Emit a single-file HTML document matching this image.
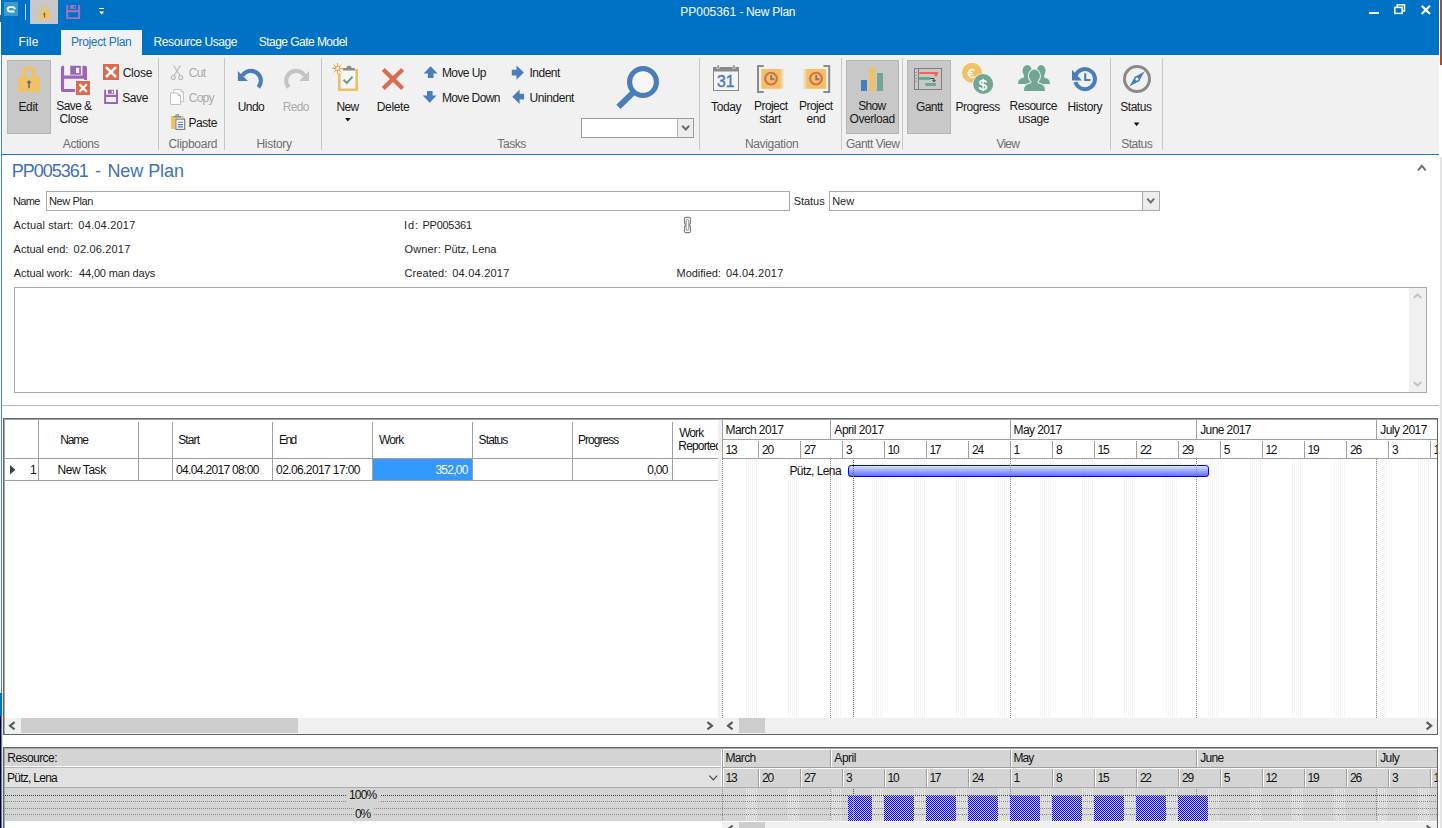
<!DOCTYPE html>
<html><head><meta charset="utf-8"><title>PP005361 - New Plan</title>
<style>
html,body{margin:0;padding:0;background:#fff;overflow:hidden;}
body{width:1442px;height:828px;position:relative;font-family:'Liberation Sans',sans-serif;}
#bg div,#bg2 div{position:absolute;}
#tx span{position:absolute;white-space:pre;font-family:'Liberation Sans',sans-serif;}
svg#ov{position:absolute;left:0;top:0;}
</style></head><body>
<div id="bg">
<div style="left:1px;top:0px;width:1438px;height:55px;background:#0072C6;"></div>
<div style="left:1440px;top:0px;width:2px;height:65px;background:#B7472A;"></div>
<div style="left:1440px;top:157px;width:2px;height:671px;background:#E4E4E4;"></div>
<div style="left:2px;top:55px;width:1437px;height:99px;background:#F1F1F1;"></div>
<div style="left:1px;top:154px;width:1438px;height:1px;background:#1979CA;"></div>
<div style="left:1px;top:55px;width:1px;height:773px;background:#4A82C2;"></div>
<div style="left:0px;top:693px;width:2px;height:23px;background:#0072C6;"></div>
<div style="left:0px;top:716px;width:1px;height:112px;background:#000;"></div>
<div style="left:2px;top:693px;width:1px;height:135px;background:#E4E4E4;"></div>
<div style="left:0px;top:15px;width:1px;height:7px;background:#555;"></div>
<div style="left:30px;top:0px;width:28px;height:24px;background:#C8C8C8;"></div>
<div style="left:25px;top:4px;width:1px;height:16px;background:rgba(255,255,255,.75);"></div>
<div style="left:61px;top:30px;width:81px;height:25px;background:#F1F1F1;"></div>
<div style="left:158px;top:58px;width:1px;height:92px;background:#C8C8C8;"></div>
<div style="left:224px;top:58px;width:1px;height:92px;background:#C8C8C8;"></div>
<div style="left:321px;top:58px;width:1px;height:92px;background:#C8C8C8;"></div>
<div style="left:699px;top:58px;width:1px;height:92px;background:#C8C8C8;"></div>
<div style="left:841px;top:58px;width:1px;height:92px;background:#C8C8C8;"></div>
<div style="left:902px;top:58px;width:1px;height:92px;background:#C8C8C8;"></div>
<div style="left:1110px;top:58px;width:1px;height:92px;background:#C8C8C8;"></div>
<div style="left:1162px;top:58px;width:1px;height:92px;background:#C8C8C8;"></div>
<div style="left:7px;top:60px;width:44px;height:74px;background:#C8C8C8;box-sizing:border-box;border:1px solid #B5B5B5;"></div>
<div style="left:846px;top:60px;width:53px;height:74px;background:#C8C8C8;box-sizing:border-box;border:1px solid #B5B5B5;"></div>
<div style="left:907px;top:60px;width:44px;height:74px;background:#C8C8C8;box-sizing:border-box;border:1px solid #B5B5B5;"></div>
<div style="left:581px;top:118px;width:113px;height:20px;background:#fff;box-sizing:border-box;border:1px solid #9A9A9A;"></div>
<div style="left:677px;top:119px;width:15px;height:18px;background:#EDEDED;border-left:1px solid #B4B4B4;"></div>
<div style="left:46px;top:191px;width:744px;height:20px;background:#fff;box-sizing:border-box;border:1px solid #ABABAB;"></div>
<div style="left:829px;top:191px;width:331px;height:20px;background:#fff;box-sizing:border-box;border:1px solid #ABABAB;"></div>
<div style="left:1142px;top:192px;width:16px;height:18px;background:#EDEDED;border-left:1px solid #ABABAB;"></div>
<div style="left:14px;top:287px;width:1413px;height:106px;background:#fff;box-sizing:border-box;border:1px solid #ABABAB;"></div>
<div style="left:1409px;top:288px;width:17px;height:104px;background:#F0F0F0;"></div>
<div style="left:2px;top:405px;width:1437px;height:1px;background:#B4B4B4;"></div>
<div style="left:3px;top:418px;width:1435px;height:1px;background:#646464;"></div>
<div style="left:3px;top:418px;width:1px;height:317px;background:#646464;"></div>
<div style="left:4px;top:419px;width:1433px;height:1px;background:#A6A6A6;"></div>
<div style="left:4px;top:419px;width:1px;height:315px;background:#A6A6A6;"></div>
<div style="left:3px;top:734px;width:1435px;height:1px;background:#646464;"></div>
<div style="left:1437px;top:418px;width:1px;height:317px;background:#646464;"></div>
<div style="left:5px;top:458px;width:713px;height:1px;background:#A0A0A0;"></div>
<div style="left:5px;top:480px;width:713px;height:1px;background:#A0A0A0;"></div>
<div style="left:38px;top:420px;width:1px;height:61px;background:#A0A0A0;"></div>
<div style="left:138px;top:422px;width:1px;height:36px;background:#A0A0A0;"></div>
<div style="left:138px;top:459px;width:1px;height:22px;background:#A0A0A0;"></div>
<div style="left:172px;top:422px;width:1px;height:36px;background:#A0A0A0;"></div>
<div style="left:172px;top:459px;width:1px;height:22px;background:#A0A0A0;"></div>
<div style="left:272px;top:422px;width:1px;height:36px;background:#A0A0A0;"></div>
<div style="left:272px;top:459px;width:1px;height:22px;background:#A0A0A0;"></div>
<div style="left:372px;top:422px;width:1px;height:36px;background:#A0A0A0;"></div>
<div style="left:372px;top:459px;width:1px;height:22px;background:#A0A0A0;"></div>
<div style="left:472px;top:422px;width:1px;height:36px;background:#A0A0A0;"></div>
<div style="left:472px;top:459px;width:1px;height:22px;background:#A0A0A0;"></div>
<div style="left:572px;top:422px;width:1px;height:36px;background:#A0A0A0;"></div>
<div style="left:572px;top:459px;width:1px;height:22px;background:#A0A0A0;"></div>
<div style="left:672px;top:422px;width:1px;height:36px;background:#A0A0A0;"></div>
<div style="left:672px;top:459px;width:1px;height:22px;background:#A0A0A0;"></div>
<div style="left:373px;top:459px;width:99px;height:21px;background:#3399FF;"></div>
<div style="left:722px;top:420px;width:1px;height:39px;background:#A0A0A0;"></div>
<div style="left:722px;top:439px;width:715px;height:1px;background:#A0A0A0;"></div>
<div style="left:722px;top:458px;width:715px;height:1px;background:#A0A0A0;"></div>
<div style="left:758px;top:441px;width:1px;height:17px;background:#A0A0A0;"></div>
<div style="left:800px;top:441px;width:1px;height:17px;background:#A0A0A0;"></div>
<div style="left:842px;top:441px;width:1px;height:17px;background:#A0A0A0;"></div>
<div style="left:884px;top:441px;width:1px;height:17px;background:#A0A0A0;"></div>
<div style="left:926px;top:441px;width:1px;height:17px;background:#A0A0A0;"></div>
<div style="left:968px;top:441px;width:1px;height:17px;background:#A0A0A0;"></div>
<div style="left:1010px;top:441px;width:1px;height:17px;background:#A0A0A0;"></div>
<div style="left:1052px;top:441px;width:1px;height:17px;background:#A0A0A0;"></div>
<div style="left:1094px;top:441px;width:1px;height:17px;background:#A0A0A0;"></div>
<div style="left:1136px;top:441px;width:1px;height:17px;background:#A0A0A0;"></div>
<div style="left:1178px;top:441px;width:1px;height:17px;background:#A0A0A0;"></div>
<div style="left:1220px;top:441px;width:1px;height:17px;background:#A0A0A0;"></div>
<div style="left:1262px;top:441px;width:1px;height:17px;background:#A0A0A0;"></div>
<div style="left:1304px;top:441px;width:1px;height:17px;background:#A0A0A0;"></div>
<div style="left:1346px;top:441px;width:1px;height:17px;background:#A0A0A0;"></div>
<div style="left:1388px;top:441px;width:1px;height:17px;background:#A0A0A0;"></div>
<div style="left:1430px;top:441px;width:1px;height:17px;background:#A0A0A0;"></div>
<div style="left:830px;top:420px;width:1px;height:19px;background:#A0A0A0;"></div>
<div style="left:1010px;top:420px;width:1px;height:19px;background:#A0A0A0;"></div>
<div style="left:1196px;top:420px;width:1px;height:19px;background:#A0A0A0;"></div>
<div style="left:1376px;top:420px;width:1px;height:19px;background:#A0A0A0;"></div>
<div style="left:5px;top:718px;width:713px;height:16px;background:#F0F0F0;"></div>
<div style="left:722px;top:718px;width:715px;height:16px;background:#F0F0F0;"></div>
<div style="left:21px;top:718px;width:277px;height:15px;background:#CDCDCD;"></div>
<div style="left:739px;top:718px;width:26px;height:15px;background:#CDCDCD;"></div>
<div style="left:3px;top:747px;width:1435px;height:1px;background:#646464;"></div>
<div style="left:3px;top:747px;width:1px;height:81px;background:#646464;"></div>
<div style="left:4px;top:748px;width:1433px;height:1px;background:#A6A6A6;"></div>
<div style="left:4px;top:748px;width:1px;height:80px;background:#A6A6A6;"></div>
<div style="left:1437px;top:747px;width:1px;height:81px;background:#646464;"></div>
<div style="left:5px;top:749px;width:716px;height:17px;background:#D4D4D4;"></div>
<div style="left:5px;top:766px;width:716px;height:1px;background:#fff;"></div>
<div style="left:5px;top:767px;width:716px;height:1px;background:#B4B4B4;"></div>
<div style="left:5px;top:768px;width:716px;height:19px;background:#E1E1E1;"></div>
<div style="left:721px;top:749px;width:1px;height:18px;background:#fff;"></div>
<div style="left:722px;top:748px;width:1px;height:40px;background:#A0A0A0;"></div>
<div style="left:5px;top:787px;width:1432px;height:1px;background:#ABABAB;"></div>
<div style="left:5px;top:788px;width:1432px;height:33px;background:#D4D4D4;"></div>
<div style="left:722px;top:822px;width:715px;height:6px;background:#F0F0F0;"></div>
<div style="left:739px;top:822px;width:26px;height:6px;background:#CDCDCD;"></div>
<div style="left:723px;top:749px;width:714px;height:18px;background:#D4D4D4;"></div>
<div style="left:723px;top:749px;width:714px;height:1px;background:#fff;"></div>
<div style="left:723px;top:749px;width:1px;height:18px;background:#fff;"></div>
<div style="left:723px;top:767px;width:714px;height:1px;background:#A0A0A0;"></div>
<div style="left:723px;top:768px;width:714px;height:19px;background:#D4D4D4;"></div>
<div style="left:723px;top:768px;width:714px;height:1px;background:#fff;"></div>
<div style="left:723px;top:768px;width:1px;height:19px;background:#fff;"></div>
<div style="left:830px;top:750px;width:1px;height:17px;background:#A0A0A0;"></div>
<div style="left:831px;top:750px;width:1px;height:17px;background:#fff;"></div>
<div style="left:1010px;top:750px;width:1px;height:17px;background:#A0A0A0;"></div>
<div style="left:1011px;top:750px;width:1px;height:17px;background:#fff;"></div>
<div style="left:1196px;top:750px;width:1px;height:17px;background:#A0A0A0;"></div>
<div style="left:1197px;top:750px;width:1px;height:17px;background:#fff;"></div>
<div style="left:1376px;top:750px;width:1px;height:17px;background:#A0A0A0;"></div>
<div style="left:1377px;top:750px;width:1px;height:17px;background:#fff;"></div>
<div style="left:758px;top:769px;width:1px;height:18px;background:#A0A0A0;"></div>
<div style="left:759px;top:769px;width:1px;height:18px;background:#fff;"></div>
<div style="left:800px;top:769px;width:1px;height:18px;background:#A0A0A0;"></div>
<div style="left:801px;top:769px;width:1px;height:18px;background:#fff;"></div>
<div style="left:842px;top:769px;width:1px;height:18px;background:#A0A0A0;"></div>
<div style="left:843px;top:769px;width:1px;height:18px;background:#fff;"></div>
<div style="left:884px;top:769px;width:1px;height:18px;background:#A0A0A0;"></div>
<div style="left:885px;top:769px;width:1px;height:18px;background:#fff;"></div>
<div style="left:926px;top:769px;width:1px;height:18px;background:#A0A0A0;"></div>
<div style="left:927px;top:769px;width:1px;height:18px;background:#fff;"></div>
<div style="left:968px;top:769px;width:1px;height:18px;background:#A0A0A0;"></div>
<div style="left:969px;top:769px;width:1px;height:18px;background:#fff;"></div>
<div style="left:1010px;top:769px;width:1px;height:18px;background:#A0A0A0;"></div>
<div style="left:1011px;top:769px;width:1px;height:18px;background:#fff;"></div>
<div style="left:1052px;top:769px;width:1px;height:18px;background:#A0A0A0;"></div>
<div style="left:1053px;top:769px;width:1px;height:18px;background:#fff;"></div>
<div style="left:1094px;top:769px;width:1px;height:18px;background:#A0A0A0;"></div>
<div style="left:1095px;top:769px;width:1px;height:18px;background:#fff;"></div>
<div style="left:1136px;top:769px;width:1px;height:18px;background:#A0A0A0;"></div>
<div style="left:1137px;top:769px;width:1px;height:18px;background:#fff;"></div>
<div style="left:1178px;top:769px;width:1px;height:18px;background:#A0A0A0;"></div>
<div style="left:1179px;top:769px;width:1px;height:18px;background:#fff;"></div>
<div style="left:1220px;top:769px;width:1px;height:18px;background:#A0A0A0;"></div>
<div style="left:1221px;top:769px;width:1px;height:18px;background:#fff;"></div>
<div style="left:1262px;top:769px;width:1px;height:18px;background:#A0A0A0;"></div>
<div style="left:1263px;top:769px;width:1px;height:18px;background:#fff;"></div>
<div style="left:1304px;top:769px;width:1px;height:18px;background:#A0A0A0;"></div>
<div style="left:1305px;top:769px;width:1px;height:18px;background:#fff;"></div>
<div style="left:1346px;top:769px;width:1px;height:18px;background:#A0A0A0;"></div>
<div style="left:1347px;top:769px;width:1px;height:18px;background:#fff;"></div>
<div style="left:1388px;top:769px;width:1px;height:18px;background:#A0A0A0;"></div>
<div style="left:1389px;top:769px;width:1px;height:18px;background:#fff;"></div>
<div style="left:1430px;top:769px;width:1px;height:18px;background:#A0A0A0;"></div>
<div style="left:1431px;top:769px;width:1px;height:18px;background:#fff;"></div>
</div>
<svg id="ov" width="1442" height="828" viewBox="0 0 1442 828" shape-rendering="crispEdges">
<defs>
<pattern id="wk" width="4" height="2" patternUnits="userSpaceOnUse"><rect x="0" y="0" width="1" height="1" fill="#EDEDED"/><rect x="2" y="1" width="1" height="1" fill="#EDEDED"/></pattern>
<pattern id="wk2" width="4" height="2" patternUnits="userSpaceOnUse"><rect x="0" y="1" width="1" height="1" fill="#F4F4F4"/><rect x="2" y="0" width="1" height="1" fill="#F4F4F4"/></pattern>
<pattern id="chk" width="2" height="2" patternUnits="userSpaceOnUse"><rect x="0" y="0" width="2" height="2" fill="#D4D4D4"/><rect x="0" y="0" width="1" height="1" fill="#0000FF"/><rect x="1" y="1" width="1" height="1" fill="#0000FF"/></pattern>
<linearGradient id="bar" x1="0" y1="0" x2="0" y2="1"><stop offset="0" stop-color="#E0F0F8"/><stop offset="0.2" stop-color="#C2D0F8"/><stop offset="1" stop-color="#5E66F8"/></linearGradient>
</defs>
<rect x="746" y="459" width="12" height="259" fill="url(#wk)"/>
<rect x="746" y="788" width="12" height="33" fill="url(#wk2)"/>
<rect x="788" y="459" width="12" height="259" fill="url(#wk)"/>
<rect x="788" y="788" width="12" height="33" fill="url(#wk2)"/>
<rect x="830" y="459" width="12" height="259" fill="url(#wk)"/>
<rect x="830" y="788" width="12" height="33" fill="url(#wk2)"/>
<rect x="872" y="459" width="12" height="259" fill="url(#wk)"/>
<rect x="872" y="788" width="12" height="33" fill="url(#wk2)"/>
<rect x="914" y="459" width="12" height="259" fill="url(#wk)"/>
<rect x="914" y="788" width="12" height="33" fill="url(#wk2)"/>
<rect x="956" y="459" width="12" height="259" fill="url(#wk)"/>
<rect x="956" y="788" width="12" height="33" fill="url(#wk2)"/>
<rect x="998" y="459" width="12" height="259" fill="url(#wk)"/>
<rect x="998" y="788" width="12" height="33" fill="url(#wk2)"/>
<rect x="1040" y="459" width="12" height="259" fill="url(#wk)"/>
<rect x="1040" y="788" width="12" height="33" fill="url(#wk2)"/>
<rect x="1082" y="459" width="12" height="259" fill="url(#wk)"/>
<rect x="1082" y="788" width="12" height="33" fill="url(#wk2)"/>
<rect x="1124" y="459" width="12" height="259" fill="url(#wk)"/>
<rect x="1124" y="788" width="12" height="33" fill="url(#wk2)"/>
<rect x="1166" y="459" width="12" height="259" fill="url(#wk)"/>
<rect x="1166" y="788" width="12" height="33" fill="url(#wk2)"/>
<rect x="1208" y="459" width="12" height="259" fill="url(#wk)"/>
<rect x="1208" y="788" width="12" height="33" fill="url(#wk2)"/>
<rect x="1250" y="459" width="12" height="259" fill="url(#wk)"/>
<rect x="1250" y="788" width="12" height="33" fill="url(#wk2)"/>
<rect x="1292" y="459" width="12" height="259" fill="url(#wk)"/>
<rect x="1292" y="788" width="12" height="33" fill="url(#wk2)"/>
<rect x="1334" y="459" width="12" height="259" fill="url(#wk)"/>
<rect x="1334" y="788" width="12" height="33" fill="url(#wk2)"/>
<rect x="1376" y="459" width="12" height="259" fill="url(#wk)"/>
<rect x="1376" y="788" width="12" height="33" fill="url(#wk2)"/>
<rect x="1418" y="459" width="12" height="259" fill="url(#wk)"/>
<rect x="1418" y="788" width="12" height="33" fill="url(#wk2)"/>
<rect x="848.5" y="465.5" width="360" height="11" rx="2.6" ry="2.6" fill="url(#bar)" stroke="#0000FF" stroke-width="1" shape-rendering="auto"/>
<line x1="722.5" y1="459" x2="722.5" y2="718" stroke="#8A8A8A" stroke-dasharray="1 1"/>
<line x1="830.5" y1="459" x2="830.5" y2="718" stroke="#8A8A8A" stroke-dasharray="1 1"/>
<line x1="853.5" y1="460" x2="853.5" y2="718" stroke="#686868" stroke-dasharray="1 1"/>
<line x1="1010.5" y1="459" x2="1010.5" y2="718" stroke="#8A8A8A" stroke-dasharray="1 1"/>
<line x1="1196.5" y1="459" x2="1196.5" y2="718" stroke="#8A8A8A" stroke-dasharray="1 1"/>
<line x1="1376.5" y1="459" x2="1376.5" y2="718" stroke="#8A8A8A" stroke-dasharray="1 1"/>
<line x1="722.5" y1="789" x2="722.5" y2="821" stroke="#8A8A8A" stroke-dasharray="1 1"/>
<line x1="830.5" y1="789" x2="830.5" y2="821" stroke="#8A8A8A" stroke-dasharray="1 1"/>
<line x1="1010.5" y1="789" x2="1010.5" y2="821" stroke="#8A8A8A" stroke-dasharray="1 1"/>
<line x1="1196.5" y1="789" x2="1196.5" y2="821" stroke="#8A8A8A" stroke-dasharray="1 1"/>
<line x1="1376.5" y1="789" x2="1376.5" y2="821" stroke="#8A8A8A" stroke-dasharray="1 1"/>
<line x1="5" y1="795.5" x2="347" y2="795.5" stroke="#404040" stroke-dasharray="1 1"/>
<line x1="381" y1="795.5" x2="1437" y2="795.5" stroke="#404040" stroke-dasharray="1 1"/>
<line x1="5" y1="801.5" x2="347" y2="801.5" stroke="#8A8A8A" stroke-dasharray="1 1"/>
<line x1="381" y1="801.5" x2="1437" y2="801.5" stroke="#8A8A8A" stroke-dasharray="1 1"/>
<line x1="5" y1="808.5" x2="354" y2="808.5" stroke="#8A8A8A" stroke-dasharray="1 1"/>
<line x1="374" y1="808.5" x2="1437" y2="808.5" stroke="#8A8A8A" stroke-dasharray="1 1"/>
<line x1="5" y1="814.5" x2="354" y2="814.5" stroke="#8A8A8A" stroke-dasharray="1 1"/>
<line x1="374" y1="814.5" x2="1437" y2="814.5" stroke="#8A8A8A" stroke-dasharray="1 1"/>
<rect x="848" y="796" width="24" height="25" fill="url(#chk)"/>
<rect x="884" y="796" width="30" height="25" fill="url(#chk)"/>
<rect x="926" y="796" width="30" height="25" fill="url(#chk)"/>
<rect x="968" y="796" width="30" height="25" fill="url(#chk)"/>
<rect x="1010" y="796" width="30" height="25" fill="url(#chk)"/>
<rect x="1052" y="796" width="30" height="25" fill="url(#chk)"/>
<rect x="1094" y="796" width="30" height="25" fill="url(#chk)"/>
<rect x="1136" y="796" width="30" height="25" fill="url(#chk)"/>
<rect x="1178" y="796" width="30" height="25" fill="url(#chk)"/>
<line x1="853.5" y1="789" x2="853.5" y2="821" stroke="#505050" stroke-dasharray="1 1"/>
<g shape-rendering="geometricPrecision">
<rect x="4" y="2" width="14" height="14" fill="#3C9BCD" shape-rendering="crispEdges"/>
<path d="M14.4,11.5 H9.9 A2.2,2.2 0 0 1 9.9,7.1 H12.5 A2.2,2.2 0 0 1 14.7,9.3" fill="none" stroke="#fff" stroke-width="1.8"/>
<rect x="39" y="11" width="11" height="8" fill="#F0C165" shape-rendering="crispEdges"/>
<path d="M41.6,11.2 V9.5 a2.9,2.9 0 0 1 5.8,0 V11.2" fill="none" stroke="#F0C165" stroke-width="1.5"/>
<path d="M43.4,14.6 L44.6,13.4 V17.6" fill="none" stroke="#6f6544" stroke-width="1.2"/>
<path transform="translate(66.2,5)" fill-rule="evenodd" fill="#A66FC0" d="M0,0 H2 V5 H11.9 V0 H13.9 V14.1 H0 Z M2,7.3 V12.2 H11.9 V7.3 Z M3.9,0 H9.8 V3.9 H3.9 Z M7.6,0.9 V3.2 H8.9 V0.9 Z"/>
<rect x="99" y="8" width="5.4" height="1.2" fill="#fff" shape-rendering="crispEdges"/>
<path d="M98.8,11 H104.6 L101.7,14.6 Z" fill="#fff"/><path d="M98.8,11 H104.6" stroke="#333" stroke-width=".8"/>
<rect x="1369" y="12" width="9.5" height="2" fill="#fff" shape-rendering="crispEdges"/>
<rect x="1397.2" y="4.8" width="7.3" height="6.2" fill="none" stroke="#fff" stroke-width="1.5"/>
<rect x="1394.8" y="7.4" width="7.3" height="6" fill="#0072C6" stroke="#fff" stroke-width="1.5"/>
<path d="M1421.7,5.7 L1430,14 M1430,5.7 L1421.7,14" stroke="#fff" stroke-width="2.3"/>
<rect x="18" y="77" width="22" height="15" fill="#F0C165"/>
<path d="M24,77.5 V73 a5,5 0 0 1 10,0 V77.5" fill="none" stroke="#F0C165" stroke-width="4"/>
<circle cx="29" cy="82.2" r="1.8" fill="#6B6B6B"/><rect x="28.2" y="83" width="1.6" height="5.2" fill="#6B6B6B"/>
<path fill="#9C66B6" d="M62.9,65.8 H64.1 V91.9 H62.9 a2,2 0 0 1 -2,-2 V67.8 a2,2 0 0 1 2,-2 Z M62,89 H76 V91.9 H62 Z M62,75.6 H87 V78.8 H62 Z M82.4,65.8 H85 a2,2 0 0 1 2,2 V80 H84 V78 H82.4 Z"/>
<path fill-rule="evenodd" fill="#9C66B6" d="M70.2,65.8 H80.9 V74.8 H70.2 Z M76,67.8 V73 H79.2 V67.8 Z"/>
<rect x="75.5" y="80.5" width="15" height="15" fill="#DB6A4E" stroke="#F1F1F1" stroke-width="1"/>
<path d="M79.4,84.2 L86.8,91.7 M86.8,84.2 L79.4,91.7" stroke="#fff" stroke-width="2.2"/>
<rect x="103" y="64" width="16" height="16" fill="#DB6A4E"/>
<path d="M106,67.2 L116,77 M116,67.2 L106,77" stroke="#fff" stroke-width="2.5"/>
<path transform="translate(104.1,89.8)" fill-rule="evenodd" fill="#9C66B6" d="M0,0 H2 V5 H11.9 V0 H13.9 V14.1 H0 Z M2,7.3 V12.2 H11.9 V7.3 Z M3.9,0 H9.8 V3.9 H3.9 Z M7.6,0.9 V3.2 H8.9 V0.9 Z"/>
<path d="M173.6,65.5 L180.2,76 M180.4,65.5 L173.8,76" stroke="#BCBCBC" stroke-width="1.3" fill="none"/>
<circle cx="173.3" cy="77.6" r="2" fill="none" stroke="#BCBCBC" stroke-width="1.2"/><circle cx="180.7" cy="77.6" r="2" fill="none" stroke="#BCBCBC" stroke-width="1.2"/>
<path d="M173.9,89.5 H181 L183.5,92 V101.5 H173.9 Z" fill="#FDFDFD" stroke="#C2C2C2" stroke-width="1"/>
<path d="M181,89.5 V92 H183.5" fill="none" stroke="#C2C2C2" stroke-width="1"/>
<path d="M170.5,93 H178 L180.5,95.5 V104.5 H170.5 Z" fill="#FDFDFD" stroke="#C2C2C2" stroke-width="1"/>
<path d="M178,93 V95.5 H180.5" fill="none" stroke="#C2C2C2" stroke-width="1"/>
<rect x="171" y="116" width="4" height="13" fill="#F0C165"/><rect x="171" y="116" width="12.4" height="1.6" fill="#F0C165"/><rect x="182" y="116" width="1.4" height="2.6" fill="#F0C165"/>
<path d="M173.4,117.4 V116 H175.4 V115 a1,1 0 0 1 1,-1 H178.2 a1,1 0 0 1 1,1 V116 H181.2 V117.4 Z" fill="#8C8C8C"/>
<rect x="176.5" y="114.7" width="1.6" height="0.9" fill="#F1F1F1"/>
<rect x="175.9" y="119.1" width="8.8" height="10.3" fill="#FDFDFD" stroke="#767676" stroke-width="1.1"/>
<path d="M177.8,122.3 H183 M177.8,124.6 H183 M177.8,126.9 H183" stroke="#4A7EBB" stroke-width="1.1"/>
<path d="M242.47,75.77 A9.85,9.85 0 1 1 258.32,87.29" fill="none" stroke="#4A7EBB" stroke-width="4.1"/><path d="M237.85,71 V81 H247.9 Z" fill="#4A7EBB"/>
<g transform="translate(547,0) scale(-1,1)"><path d="M242.47,75.77 A9.85,9.85 0 1 1 258.32,87.29" fill="none" stroke="#C4C4C4" stroke-width="4.1"/><path d="M237.85,71 V81 H247.9 Z" fill="#C4C4C4"/></g>
<rect x="340.6" y="70.5" width="14.8" height="18" fill="#F6F6F6"/>
<path d="M339.3,73.3 V89.7 H356.7 V69" fill="none" stroke="#EDBF68" stroke-width="2.6"/>
<path d="M342.6,70.6 H355.4 L354.6,68 H351.6 a2.6,2.2 0 0 0 -5.2,0 H343.4 Z" fill="#8C8C8C"/>
<path d="M343.6,79.8 L346.8,83 L352.6,76.6" fill="none" stroke="#6AA28C" stroke-width="2.1"/>
<path d="M337.5,63 V74 M332,68.5 H343 M333.6,64.6 L341.4,72.4 M341.4,64.6 L333.6,72.4" stroke="#F0A63C" stroke-width="1"/>
<circle cx="337.5" cy="68.5" r="2" fill="#F1F1F1" stroke="#F0A63C" stroke-width="1"/>
<path d="M383.3,69.4 L402.6,88.6 M402.6,69.4 L383.3,88.6" stroke="#DB6A4E" stroke-width="4.2"/>
<path fill="#4A7EBB" d="M430.6,66.3 L437.6,73.6 H433.5 V78 H427.8 V73.6 H423.6 Z"/>
<path fill="#4A7EBB" d="M427,91 H432.6 V95.5 H436.6 L429.7,102.7 L422.7,95.5 H427 Z"/>
<path fill="#4A7EBB" d="M511.8,69.8 H516.5 V65.4 L523.9,72.6 L516.5,79.8 V75.4 H511.8 Z"/>
<path fill="#4A7EBB" d="M524.1,93.8 H519.6 V89.5 L512.3,96.7 L519.6,103.9 V99.6 H524.1 Z"/>
<circle cx="643" cy="82" r="13.4" fill="#F7F7F7" stroke="#4A7EBB" stroke-width="5.2"/>
<path d="M633.6,92.2 L618.4,106.8" stroke="#4A7EBB" stroke-width="6"/>
<path d="M682.2,125.8 l3.5,3.7 l3.5,-3.7" fill="none" stroke="#6A6A6A" stroke-width="2"/>
<path d="M1147.2,198.6 l3.5,3.9 l3.5,-3.9" fill="none" stroke="#6E6E6E" stroke-width="1.9"/>
<path d="M1418,170.4 l3.85,-4.6 l3.85,4.6" fill="none" stroke="#707070" stroke-width="1.9"/>
<rect x="713.5" y="67.5" width="25" height="23" fill="#F5F5F5" stroke="#8A8A8A" stroke-width="1"/>
<rect x="713" y="67" width="26" height="4.5" fill="#8A8A8A"/>
<rect x="717" y="65" width="2.2" height="3.6" fill="#8A8A8A" stroke="#F1F1F1" stroke-width=".6"/><rect x="732.8" y="65" width="2.2" height="3.6" fill="#8A8A8A" stroke="#F1F1F1" stroke-width=".6"/>
<text x="717" y="86.8" font-family="Liberation Sans, sans-serif" font-size="17" fill="#4A7EBB" stroke="#4A7EBB" stroke-width=".45" textLength="17.6" lengthAdjust="spacingAndGlyphs">31</text>
<defs><linearGradient id="fr" x1="0" x2="1" y1="0" y2="0"><stop offset="0" stop-color="#F0C165"/><stop offset=".78" stop-color="#F0C165"/><stop offset="1" stop-color="#F0C165" stop-opacity="0"/></linearGradient><linearGradient id="fl" x1="1" x2="0" y1="0" y2="0"><stop offset="0" stop-color="#F0C165"/><stop offset=".78" stop-color="#F0C165"/><stop offset="1" stop-color="#F0C165" stop-opacity="0"/></linearGradient></defs>
<rect x="761.3" y="69" width="23.4" height="19.8" fill="url(#fr)"/>
<path d="M763.8,66 H758 V92 H763.8" fill="none" stroke="#8A8A8A" stroke-width="2"/>
<circle cx="771" cy="78.6" r="5.9" fill="none" stroke="#DB6A4E" stroke-width="2.1"/><path d="M771.2,75 V79.2 H774.4" fill="none" stroke="#7A7A7A" stroke-width="1.9"/>
<rect x="802.3" y="69" width="23.8" height="19.8" fill="url(#fl)"/>
<path d="M823.4,66 H829.2 V92 H823.4" fill="none" stroke="#8A8A8A" stroke-width="2"/>
<circle cx="816" cy="78.6" r="5.9" fill="none" stroke="#DB6A4E" stroke-width="2.1"/><path d="M816.2,75 V79.2 H819.4" fill="none" stroke="#7A7A7A" stroke-width="1.9"/>
<rect x="861" y="80" width="6" height="11" fill="#4A7EBB"/><rect x="869" y="67" width="6" height="24" fill="#F0C165"/><rect x="877" y="73" width="6" height="18" fill="#72A694"/>
<rect x="914.5" y="68.5" width="27" height="21" fill="none" stroke="#7E7E7E" stroke-width="1"/>
<path d="M918.5,68.5 V89.5" stroke="#7E7E7E" stroke-width="1"/><path d="M915,72.5 H917 M915,75.5 H917 M915,78.5 H917 M915,81.5 H917" stroke="#9A9A9A" stroke-width=".8"/>
<path d="M919.2,72 H938.2 V73.6 L936,77 L933.6,74 H919.2 Z" fill="#EE6A48"/>
<rect x="919.2" y="77" width="11" height="3" fill="#72A694"/><rect x="925.2" y="83" width="10.8" height="3" fill="#72A694"/>
<path d="M930.2,78.5 H934 V81.5 M932.4,80 L934,81.8 L935.6,80" fill="none" stroke="#3A3A3A" stroke-width="1"/>
<circle cx="972" cy="72.8" r="10" fill="#F0C165"/>
<circle cx="983.2" cy="84" r="10.6" fill="#F1F1F1"/><circle cx="983.2" cy="84" r="10" fill="#72A694"/>
<text x="967.6" y="77.6" font-family="Liberation Sans, sans-serif" font-size="13" fill="#fff" stroke="#fff" stroke-width=".3">€</text>
<text x="978.8" y="89.6" font-family="Liberation Sans, sans-serif" font-size="15" fill="#fff" stroke="#fff" stroke-width=".3">$</text>
<path d="M1018,84 C1018,79.7 1020.5,78.5 1023.8,77.5 L1024.0,74.6 L1030.0,74.6 L1030.2,77.5 C1033.5,78.5 1036,79.7 1036,84 Z" fill="#72A694"/>
<ellipse cx="1027.2" cy="70.8" rx="4.7" ry="5.8" fill="#72A694"/>
<path d="M1032,84 C1032,79.7 1034.5,78.5 1037.8,77.5 L1038.0,74.6 L1044.0,74.6 L1044.2,77.5 C1047.5,78.5 1050,79.7 1050,84 Z" fill="#72A694"/>
<ellipse cx="1041.2" cy="70.8" rx="4.4" ry="5.8" fill="#72A694"/>
<path d="M1024,91 C1024,85.4 1026.5,84.2 1031.3,83.2 L1031.5,80.5 L1037.5,80.5 L1037.7,83.2 C1042.5,84.2 1045,85.4 1045,91 Z" fill="#F1F1F1" stroke="#F1F1F1" stroke-width="2"/>
<ellipse cx="1034.4" cy="76" rx="5.5" ry="6.5" fill="#F1F1F1" stroke="#F1F1F1" stroke-width="2"/>
<path d="M1024,91 C1024,85.4 1026.5,84.2 1031.3,83.2 L1031.5,80.5 L1037.5,80.5 L1037.7,83.2 C1042.5,84.2 1045,85.4 1045,91 Z" fill="#72A694"/>
<ellipse cx="1034.4" cy="76" rx="5.5" ry="6.5" fill="#72A694"/>
<path d="M1075.6,75.6 A10,10 0 1 1 1075.4,82" fill="none" stroke="#4A7EBB" stroke-width="4"/>
<path d="M1072,69.8 V80.6 H1082 Z" fill="#4A7EBB"/>
<path d="M1085.2,73.2 V80 H1090.4" fill="none" stroke="#4A7EBB" stroke-width="2.1"/>
<circle cx="1137" cy="79" r="12.5" fill="none" stroke="#8A8A8A" stroke-width="3"/>
<path d="M1144.6,71.4 L1139.2,81 L1135,76.8 Z M1129.4,86.6 L1134.8,77 L1139,81.2 Z" fill="#4A7EBB"/>
<circle cx="1137" cy="79" r="2.2" fill="#F1F1F1" stroke="#4A7EBB" stroke-width="1.3"/>
<path d="M345,118 H350.6 L347.8,121.6 Z" fill="#111"/><path d="M1133.8,122.6 H1139.4 L1136.6,126.2 Z" fill="#111"/>
<rect x="684.4" y="217.4" width="6.2" height="7" rx="1.7" fill="none" stroke="#808080" stroke-width="1.1"/><rect x="684.4" y="225.6" width="6.2" height="7" rx="1.7" fill="none" stroke="#808080" stroke-width="1.1"/>
<rect x="686.1" y="219.6" width="2.8" height="10.8" rx="1.3" fill="#fff" stroke="#808080" stroke-width="1"/>
<path d="M1413.8,298 l3.7,-3.7 l3.7,3.7 M1413.8,382 l3.7,3.7 l3.7,-3.7" fill="none" stroke="#C2C2C2" stroke-width="1.9"/>
<path d="M10,465 L15.4,469.7 L10,474.4 Z" fill="#404040"/>
<path d="M14.6,722.2 l-4.6,3.6 l4.6,3.6 M707.4,722.2 l4.6,3.6 l-4.6,3.6 M732.6,722.2 l-4.6,3.6 l4.6,3.6 M1426.6,722.2 l4.6,3.6 l-4.6,3.6 M732.6,825.6 l-4.6,3.6 M1426.6,825.6 l4.6,3.6" fill="none" stroke="#5A5A5A" stroke-width="2.1"/>
<path d="M709.4,775.6 l3.9,4.2 l3.9,-4.2" fill="none" stroke="#444" stroke-width="1.2"/>
</g>
</svg>
<div id="tx">
<span style="left:680.25px;top:4px;font-size:12px;line-height:16px;color:#fff;letter-spacing:-0.014px;">PP005361</span>
<span style="left:739.51px;top:4px;font-size:12px;line-height:16px;color:#fff;">-</span>
<span style="left:745.90px;top:4px;font-size:12px;line-height:16px;color:#fff;letter-spacing:-0.251px;">New Plan</span>
<span style="left:18.40px;top:34px;font-size:12px;line-height:16px;color:#fff;letter-spacing:0.2px;">File</span>
<span style="left:70.90px;top:34px;font-size:12px;line-height:16px;color:#1C73C4;letter-spacing:-0.352px;">Project Plan</span>
<span style="left:153.60px;top:34px;font-size:12px;line-height:16px;color:#fff;letter-spacing:-0.431px;">Resource Usage</span>
<span style="left:258.75px;top:34px;font-size:12px;line-height:16px;color:#fff;letter-spacing:-0.535px;">Stage Gate Model</span>
<span style="left:18.40px;top:99px;font-size:12px;line-height:16px;color:#1A1A1A;letter-spacing:-0.335px;">Edit</span>
<span style="left:56.25px;top:98px;font-size:12px;line-height:16px;color:#1A1A1A;letter-spacing:-0.588px;">Save &amp;</span>
<span style="left:59.44px;top:111px;font-size:12px;line-height:16px;color:#1A1A1A;letter-spacing:-0.437px;">Close</span>
<span style="left:122.64px;top:65px;font-size:12px;line-height:16px;color:#1A1A1A;letter-spacing:-0.237px;">Close</span>
<span style="left:122.25px;top:90px;font-size:12px;line-height:16px;color:#1A1A1A;letter-spacing:-0.418px;">Save</span>
<span style="left:62.86px;top:136px;font-size:12px;line-height:16px;color:#6E6E6E;letter-spacing:-0.467px;">Actions</span>
<span style="left:188.84px;top:65px;font-size:12px;line-height:16px;color:#A9A9A9;letter-spacing:-0.72px;">Cut</span>
<span style="left:188.84px;top:90px;font-size:12px;line-height:16px;color:#A9A9A9;letter-spacing:-0.793px;">Copy</span>
<span style="left:188.60px;top:115px;font-size:12px;line-height:16px;color:#1A1A1A;letter-spacing:-0.479px;">Paste</span>
<span style="left:168.44px;top:136px;font-size:12px;line-height:16px;color:#6E6E6E;letter-spacing:-0.286px;">Clipboard</span>
<span style="left:237.75px;top:99px;font-size:12px;line-height:16px;color:#1A1A1A;letter-spacing:-0.567px;">Undo</span>
<span style="left:282.75px;top:99px;font-size:12px;line-height:16px;color:#A9A9A9;letter-spacing:-0.7px;">Redo</span>
<span style="left:256.50px;top:136px;font-size:12px;line-height:16px;color:#6E6E6E;letter-spacing:-0.296px;">History</span>
<span style="left:336.50px;top:99px;font-size:12px;line-height:16px;color:#1A1A1A;letter-spacing:-0.715px;">New</span>
<span style="left:376.75px;top:99px;font-size:12px;line-height:16px;color:#1A1A1A;letter-spacing:-0.333px;">Delete</span>
<span style="left:441.90px;top:65px;font-size:12px;line-height:16px;color:#1A1A1A;letter-spacing:-0.584px;">Move Up</span>
<span style="left:441.90px;top:90px;font-size:12px;line-height:16px;color:#1A1A1A;letter-spacing:-0.594px;">Move Down</span>
<span style="left:529.56px;top:65px;font-size:12px;line-height:16px;color:#1A1A1A;letter-spacing:-0.532px;">Indent</span>
<span style="left:529.60px;top:90px;font-size:12px;line-height:16px;color:#1A1A1A;letter-spacing:-0.457px;">Unindent</span>
<span style="left:497.36px;top:136px;font-size:12px;line-height:16px;color:#6E6E6E;letter-spacing:-0.453px;">Tasks</span>
<span style="left:711.11px;top:99px;font-size:12px;line-height:16px;color:#1A1A1A;letter-spacing:-0.389px;">Today</span>
<span style="left:754.00px;top:98px;font-size:12px;line-height:16px;color:#1A1A1A;letter-spacing:-0.559px;">Project</span>
<span style="left:759.50px;top:111px;font-size:12px;line-height:16px;color:#1A1A1A;letter-spacing:-0.401px;">start</span>
<span style="left:799.00px;top:98px;font-size:12px;line-height:16px;color:#1A1A1A;letter-spacing:-0.559px;">Project</span>
<span style="left:806.54px;top:111px;font-size:12px;line-height:16px;color:#1A1A1A;letter-spacing:-0.433px;">end</span>
<span style="left:744.90px;top:136px;font-size:12px;line-height:16px;color:#6E6E6E;letter-spacing:-0.319px;">Navigation</span>
<span style="left:858.25px;top:98px;font-size:12px;line-height:16px;color:#1A1A1A;letter-spacing:-0.728px;">Show</span>
<span style="left:849.50px;top:111px;font-size:12px;line-height:16px;color:#1A1A1A;letter-spacing:-0.414px;">Overload</span>
<span style="left:845.93px;top:136px;font-size:12px;line-height:16px;color:#6E6E6E;letter-spacing:-0.496px;">Gantt View</span>
<span style="left:915.93px;top:99px;font-size:12px;line-height:16px;color:#1A1A1A;letter-spacing:-0.571px;">Gantt</span>
<span style="left:955.50px;top:99px;font-size:12px;line-height:16px;color:#1A1A1A;letter-spacing:-0.461px;">Progress</span>
<span style="left:1009.60px;top:98px;font-size:12px;line-height:16px;color:#1A1A1A;letter-spacing:-0.514px;">Resource</span>
<span style="left:1018.29px;top:111px;font-size:12px;line-height:16px;color:#1A1A1A;letter-spacing:-0.402px;">usage</span>
<span style="left:1067.50px;top:99px;font-size:12px;line-height:16px;color:#1A1A1A;letter-spacing:-0.379px;">History</span>
<span style="left:996.46px;top:136px;font-size:12px;line-height:16px;color:#6E6E6E;letter-spacing:-0.797px;">View</span>
<span style="left:1120.26px;top:99px;font-size:12px;line-height:16px;color:#1A1A1A;letter-spacing:-0.477px;">Status</span>
<span style="left:1121.26px;top:136px;font-size:12px;line-height:16px;color:#6E6E6E;letter-spacing:-0.497px;">Status</span>
<span style="left:11.73px;top:160px;font-size:18px;line-height:22px;color:#4470B2;letter-spacing:-1.008px;">PP005361</span>
<span style="left:95.09px;top:160px;font-size:18px;line-height:22px;color:#4470B2;">-</span>
<span style="left:107.38px;top:160px;font-size:18px;line-height:22px;color:#4470B2;letter-spacing:-0.054px;">New Plan</span>
<span style="left:12.96px;top:194px;font-size:11px;line-height:15px;color:#262626;letter-spacing:-0.655px;">Name</span>
<span style="left:48.97px;top:194px;font-size:11px;line-height:15px;color:#262626;letter-spacing:-0.365px;">New Plan</span>
<span style="left:793.63px;top:194px;font-size:11px;line-height:15px;color:#262626;letter-spacing:-0.026px;">Status</span>
<span style="left:832.22px;top:194px;font-size:11px;line-height:15px;color:#262626;letter-spacing:-0.048px;">New</span>
<span style="left:13.61px;top:218px;font-size:11px;line-height:15px;color:#262626;letter-spacing:0.138px;">Actual start:</span>
<span style="left:78.34px;top:218px;font-size:11px;line-height:15px;color:#262626;letter-spacing:0.209px;">04.04.2017</span>
<span style="left:13.61px;top:242px;font-size:11px;line-height:15px;color:#262626;letter-spacing:-0.035px;">Actual end:</span>
<span style="left:73.59px;top:242px;font-size:11px;line-height:15px;color:#262626;letter-spacing:0.181px;">02.06.2017</span>
<span style="left:13.86px;top:266px;font-size:11px;line-height:15px;color:#262626;letter-spacing:-0.11px;">Actual work:</span>
<span style="left:79.06px;top:266px;font-size:11px;line-height:15px;color:#262626;letter-spacing:-0.15px;">44,00 man days</span>
<span style="left:403.96px;top:218px;font-size:11px;line-height:15px;color:#262626;letter-spacing:0.92px;">Id:</span>
<span style="left:422.51px;top:218px;font-size:11px;line-height:15px;color:#262626;letter-spacing:-0.261px;">PP005361</span>
<span style="left:404.54px;top:242px;font-size:11px;line-height:15px;color:#262626;letter-spacing:0.141px;">Owner:</span>
<span style="left:444.21px;top:242px;font-size:11px;line-height:15px;color:#262626;letter-spacing:-0.034px;">Pütz, Lena</span>
<span style="left:404.47px;top:266px;font-size:11px;line-height:15px;color:#262626;letter-spacing:0.09px;">Created:</span>
<span style="left:452.19px;top:266px;font-size:11px;line-height:15px;color:#262626;letter-spacing:0.226px;">04.04.2017</span>
<span style="left:676.51px;top:266px;font-size:11px;line-height:15px;color:#262626;letter-spacing:-0.034px;">Modified:</span>
<span style="left:725.89px;top:266px;font-size:11px;line-height:15px;color:#262626;letter-spacing:0.259px;">04.04.2017</span>
<span style="left:60.25px;top:432px;font-size:12px;line-height:16px;color:#111;letter-spacing:-1.138px;">Name</span>
<span style="left:178.25px;top:432px;font-size:12px;line-height:16px;color:#111;letter-spacing:-0.902px;">Start</span>
<span style="left:279.00px;top:432px;font-size:12px;line-height:16px;color:#111;letter-spacing:-1.625px;">End</span>
<span style="left:378.92px;top:432px;font-size:12px;line-height:16px;color:#111;letter-spacing:-0.848px;">Work</span>
<span style="left:478.56px;top:432px;font-size:12px;line-height:16px;color:#111;letter-spacing:-0.857px;">Status</span>
<span style="left:578.00px;top:432px;font-size:12px;line-height:16px;color:#111;letter-spacing:-0.961px;">Progress</span>
<span style="left:679.21px;top:425px;font-size:12px;line-height:16px;color:#111;letter-spacing:-0.948px;">Work</span>
<span style="left:678.30px;top:438px;font-size:12px;line-height:16px;color:#111;letter-spacing:-0.836px;width:39.4px;overflow:hidden;">Reported</span>
<span style="left:30.00px;top:462px;font-size:12px;line-height:16px;color:#111;">1</span>
<span style="left:57.50px;top:462px;font-size:12px;line-height:16px;color:#111;letter-spacing:-0.447px;">New Task</span>
<span style="left:176.09px;top:462px;font-size:12px;line-height:16px;color:#111;letter-spacing:-0.672px;">04.04.2017 08:00</span>
<span style="left:276.10px;top:462px;font-size:12px;line-height:16px;color:#111;letter-spacing:-0.606px;">02.06.2017 17:00</span>
<span style="left:435.40px;top:462px;font-size:12px;line-height:16px;color:#fff;letter-spacing:-0.755px;">352,00</span>
<span style="left:647.20px;top:462px;font-size:12px;line-height:16px;color:#111;letter-spacing:-0.728px;">0,00</span>
<span style="left:789.40px;top:463px;font-size:12px;line-height:16px;color:#111;letter-spacing:-0.571px;">Pütz, Lena</span>
<span style="left:725.50px;top:422px;font-size:12px;line-height:16px;color:#111;letter-spacing:-0.556px;">March 2017</span>
<span style="left:725.50px;top:750px;font-size:12px;line-height:16px;color:#111;letter-spacing:-0.68px;">March</span>
<span style="left:834.37px;top:422px;font-size:12px;line-height:16px;color:#111;letter-spacing:-0.476px;">April 2017</span>
<span style="left:834.37px;top:750px;font-size:12px;line-height:16px;color:#111;letter-spacing:-0.478px;">April</span>
<span style="left:1013.50px;top:422px;font-size:12px;line-height:16px;color:#111;letter-spacing:-0.58px;">May 2017</span>
<span style="left:1013.50px;top:750px;font-size:12px;line-height:16px;color:#111;letter-spacing:-0.92px;">May</span>
<span style="left:1200.17px;top:422px;font-size:12px;line-height:16px;color:#111;letter-spacing:-0.589px;">June 2017</span>
<span style="left:1200.17px;top:750px;font-size:12px;line-height:16px;color:#111;letter-spacing:-0.638px;">June</span>
<span style="left:1380.17px;top:422px;font-size:12px;line-height:16px;color:#111;letter-spacing:-0.514px;">July 2017</span>
<span style="left:1380.17px;top:750px;font-size:12px;line-height:16px;color:#111;letter-spacing:-0.558px;">July</span>
<span style="left:725.50px;top:442px;font-size:12px;line-height:16px;color:#111;letter-spacing:-1.275px;">13</span>
<span style="left:725.50px;top:770px;font-size:12px;line-height:16px;color:#111;letter-spacing:-1.275px;">13</span>
<span style="left:761.95px;top:442px;font-size:12px;line-height:16px;color:#111;letter-spacing:-1.105px;">20</span>
<span style="left:761.95px;top:770px;font-size:12px;line-height:16px;color:#111;letter-spacing:-1.105px;">20</span>
<span style="left:803.95px;top:442px;font-size:12px;line-height:16px;color:#111;letter-spacing:-1.155px;">27</span>
<span style="left:803.95px;top:770px;font-size:12px;line-height:16px;color:#111;letter-spacing:-1.155px;">27</span>
<span style="left:845.90px;top:442px;font-size:12px;line-height:16px;color:#111;">3</span>
<span style="left:845.90px;top:770px;font-size:12px;line-height:16px;color:#111;">3</span>
<span style="left:887.50px;top:442px;font-size:12px;line-height:16px;color:#111;letter-spacing:-1.255px;">10</span>
<span style="left:887.50px;top:770px;font-size:12px;line-height:16px;color:#111;letter-spacing:-1.255px;">10</span>
<span style="left:929.50px;top:442px;font-size:12px;line-height:16px;color:#111;letter-spacing:-1.305px;">17</span>
<span style="left:929.50px;top:770px;font-size:12px;line-height:16px;color:#111;letter-spacing:-1.305px;">17</span>
<span style="left:971.95px;top:442px;font-size:12px;line-height:16px;color:#111;letter-spacing:-1.21px;">24</span>
<span style="left:971.95px;top:770px;font-size:12px;line-height:16px;color:#111;letter-spacing:-1.21px;">24</span>
<span style="left:1013.50px;top:442px;font-size:12px;line-height:16px;color:#111;">1</span>
<span style="left:1013.50px;top:770px;font-size:12px;line-height:16px;color:#111;">1</span>
<span style="left:1056.01px;top:442px;font-size:12px;line-height:16px;color:#111;">8</span>
<span style="left:1056.01px;top:770px;font-size:12px;line-height:16px;color:#111;">8</span>
<span style="left:1097.50px;top:442px;font-size:12px;line-height:16px;color:#111;letter-spacing:-1.245px;">15</span>
<span style="left:1097.50px;top:770px;font-size:12px;line-height:16px;color:#111;letter-spacing:-1.245px;">15</span>
<span style="left:1139.94px;top:442px;font-size:12px;line-height:16px;color:#111;letter-spacing:-1.33px;">22</span>
<span style="left:1139.94px;top:770px;font-size:12px;line-height:16px;color:#111;letter-spacing:-1.33px;">22</span>
<span style="left:1181.94px;top:442px;font-size:12px;line-height:16px;color:#111;letter-spacing:-1.14px;">29</span>
<span style="left:1181.94px;top:770px;font-size:12px;line-height:16px;color:#111;letter-spacing:-1.14px;">29</span>
<span style="left:1223.84px;top:442px;font-size:12px;line-height:16px;color:#111;">5</span>
<span style="left:1223.84px;top:770px;font-size:12px;line-height:16px;color:#111;">5</span>
<span style="left:1265.50px;top:442px;font-size:12px;line-height:16px;color:#111;letter-spacing:-1.48px;">12</span>
<span style="left:1265.50px;top:770px;font-size:12px;line-height:16px;color:#111;letter-spacing:-1.48px;">12</span>
<span style="left:1307.50px;top:442px;font-size:12px;line-height:16px;color:#111;letter-spacing:-1.29px;">19</span>
<span style="left:1307.50px;top:770px;font-size:12px;line-height:16px;color:#111;letter-spacing:-1.29px;">19</span>
<span style="left:1349.94px;top:442px;font-size:12px;line-height:16px;color:#111;letter-spacing:-1.1px;">26</span>
<span style="left:1349.94px;top:770px;font-size:12px;line-height:16px;color:#111;letter-spacing:-1.1px;">26</span>
<span style="left:1391.90px;top:442px;font-size:12px;line-height:16px;color:#111;">3</span>
<span style="left:1391.90px;top:770px;font-size:12px;line-height:16px;color:#111;">3</span>
<span style="left:1433.50px;top:442px;font-size:12px;line-height:16px;color:#111;letter-spacing:-1.255px;">10</span>
<span style="left:1433.50px;top:770px;font-size:12px;line-height:16px;color:#111;letter-spacing:-1.255px;">10</span>
<span style="left:7.30px;top:750px;font-size:12px;line-height:16px;color:#111;letter-spacing:-0.566px;">Resource:</span>
<span style="left:7.10px;top:770px;font-size:12px;line-height:16px;color:#111;letter-spacing:-0.749px;">Pütz, Lena</span>
<span style="left:348.90px;top:787px;font-size:12px;line-height:16px;color:#111;letter-spacing:-0.8px;">100%</span>
<span style="left:354.89px;top:806px;font-size:12px;line-height:16px;color:#111;letter-spacing:-1.135px;">0%</span>
</div>
<div id="bg2">
<div style="left:718px;top:420px;width:4px;height:314px;background:#F0F0F0;"></div>
<div style="left:1437px;top:418px;width:1px;height:317px;background:#646464;"></div>
<div style="left:1437px;top:747px;width:1px;height:81px;background:#646464;"></div>
<div style="left:1439px;top:155px;width:1px;height:673px;background:#fff;"></div>
<div style="left:1438px;top:406px;width:1px;height:422px;background:#fff;"></div>
<div style="left:1440px;top:157px;width:2px;height:671px;background:#E4E4E4;"></div>
</div>
</body></html>
